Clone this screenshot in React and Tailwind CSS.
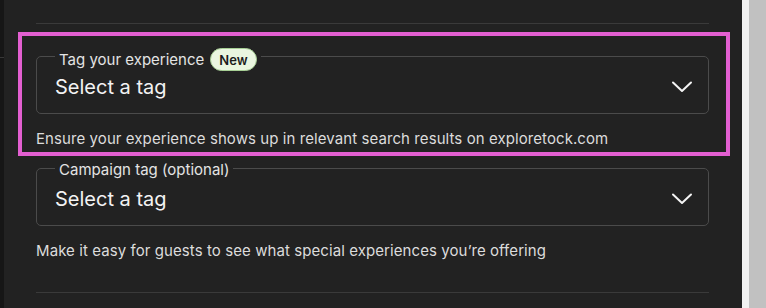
function Chevron() {
    return (
        <svg width="22" height="12" viewBox="0 0 22 12" fill="none" className="shrink-0">
            <path d="M2 1.5 L11 10 L20 1.5" stroke="#f4f4f4" strokeWidth="2" strokeLinecap="round" strokeLinejoin="round" />
        </svg>
    );
}

function TagSelect({ label, badge }) {
    return (
        <div className="relative h-[58px] rounded-[5px] border border-[#4b4b4b] flex items-center justify-between pl-[18px] pr-[15px] pt-[3px]">
            <div className="absolute left-[18px] top-[-9px] flex items-center gap-[6px] bg-[#222222] px-[4px] text-[15px] leading-5 text-[#e4e4e4]">
                <span>{label}</span>
                {badge && (
                    <span className="flex h-[23px] items-center rounded-full border border-[#a7cf95] bg-[#eaf6e0] px-[8px] text-[13px] font-semibold text-[#1c1c1c]">
                        {badge}
                    </span>
                )}
            </div>
            <span className="text-[20px] leading-7 text-[#f3f3f3]">Select a tag</span>
            <Chevron />
        </div>
    );
}

export default function App() {
    return (
        <div className="flex h-[308px] w-[766px] overflow-hidden font-['Inter',sans-serif]">
            <div className="w-[4px] bg-[#161616]">
                <div className="mt-[57px] h-px bg-[#383838]"></div>
            </div>

            <div className="flex-1 bg-[#222222] pl-[32px] pr-[33px] pt-[23px]">
                <div className="h-px bg-[#3a3a3a]"></div>

                <div className="mt-[8px] ml-[-18px] mr-[-21px] border-4 border-[#e35fd1] pl-[14px] pr-[17px] pt-[20px] pb-[3px]">
                    <TagSelect label="Tag your experience" badge="New" />
                    <p className="mt-[15px] text-[15px] leading-5 tracking-[0.08px] text-[#dcdcdc]">
                        Ensure your experience shows up in relevant search results on exploretock.com
                    </p>
                </div>

                <div className="mt-[12px]">
                    <TagSelect label="Campaign tag (optional)" />
                </div>
                <p className="mt-[15px] text-[15px] leading-5 tracking-[0.08px] text-[#dcdcdc]">
                    Make it easy for guests to see what special experiences you’re offering
                </p>

                <div className="mt-[31px] h-px bg-[#3a3a3a]"></div>
            </div>

            <div className="w-[7px] bg-[#f1f1f1]"></div>
            <div className="w-[17px] bg-[#c1c1c1]"></div>
        </div>
    );
}
